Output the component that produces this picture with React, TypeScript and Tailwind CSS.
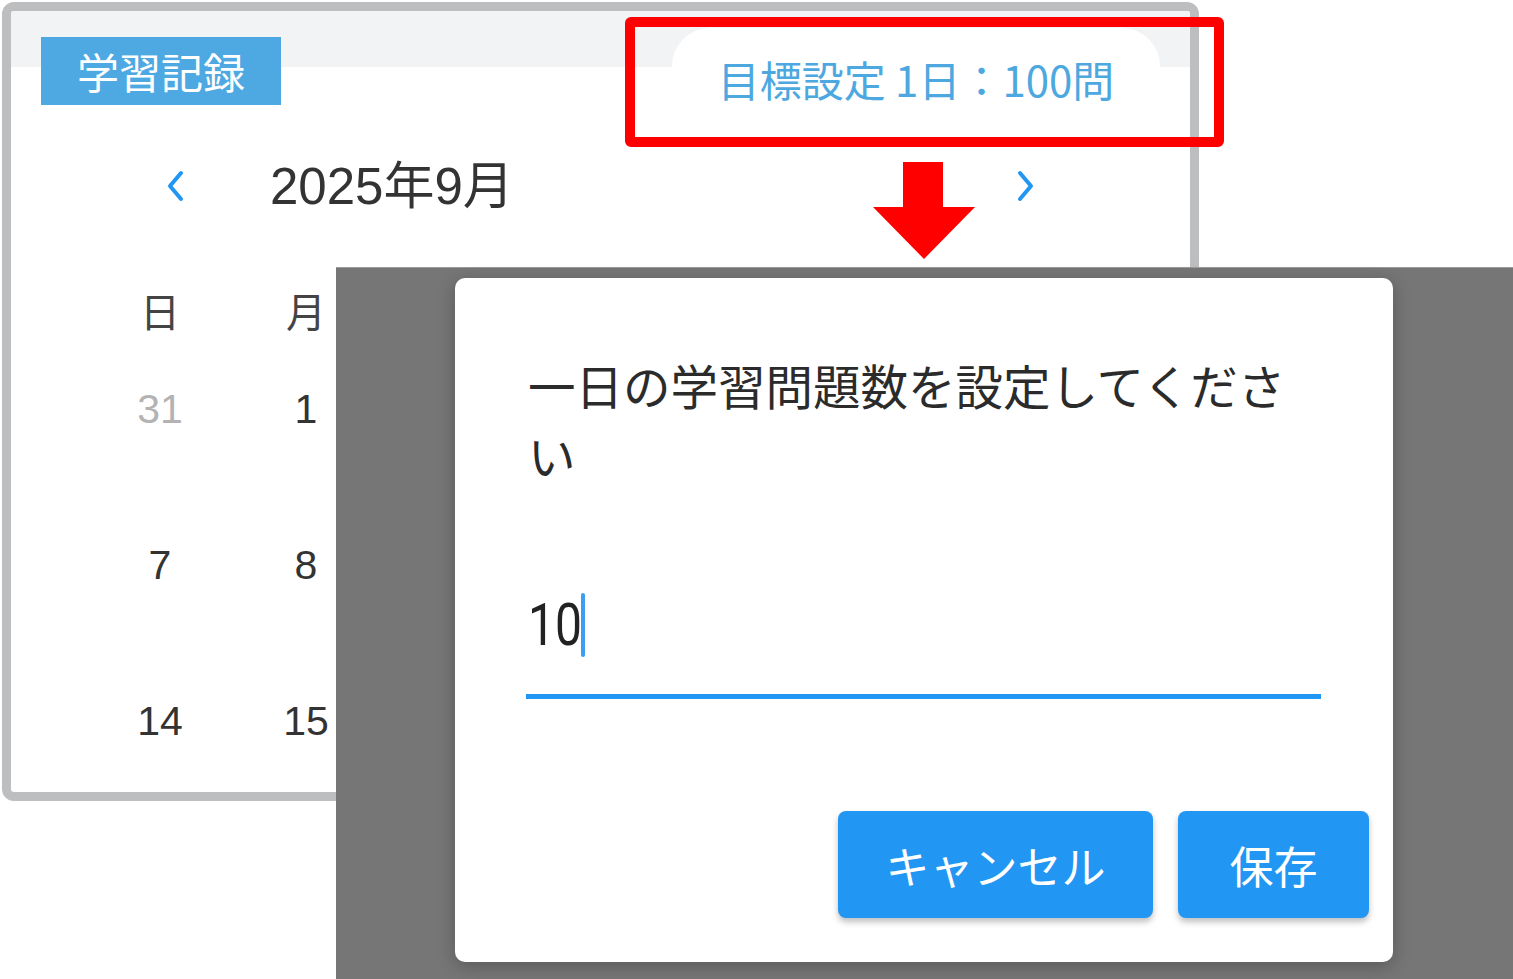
const jp = { fontFamily: '"Noto Sans CJK JP", "Noto Sans", sans-serif' }
const cal = { fontFamily: '"Liberation Sans", "Noto Sans CJK JP", sans-serif' }

const weekdays = ['日', '月', '火', '水', '木', '金', '土']
const rows = [
  [31, 1, 2, 3, 4, 5, 6],
  [7, 8, 9, 10, 11, 12, 13],
  [14, 15, 16, 17, 18, 19, 20],
]

function Chevron({ dir }: { dir: 'left' | 'right' }) {
  return (
    <svg width="20" height="32" viewBox="0 0 20 32" fill="none" stroke="#2196f3" strokeWidth="4" strokeLinecap="round" strokeLinejoin="round">
      {dir === 'left' ? <polyline points="15,3 4,16 15,29" /> : <polyline points="5,3 16,16 5,29" />}
    </svg>
  )
}

function Calendar() {
  return (
    <div className="ml-[2px] mt-[2px] w-[1197px] h-[799px] border-[9px] border-[#bdbec0] rounded-[12px] overflow-hidden bg-white">
      {/* tabs */}
      <div className="flex h-[94px] bg-[linear-gradient(to_bottom,#f2f3f5_56px,#ffffff_56px)]">
        <div style={jp} className="ml-[30px] mt-[26px] w-[240px] h-[68px] bg-[#4ea8e2] text-white text-[42px] leading-none flex items-center justify-center">
          学習記録
        </div>
        <div style={jp} className="ml-[391px] mt-[17px] w-[488px] h-[77px] bg-white rounded-t-[38px] text-[#4ea8e0] text-[42px] leading-none flex justify-center pt-[30px]">
          目標設定 1日：100問
        </div>
      </div>

      {/* month nav */}
      <div className="flex items-center h-[60px] mt-[51px] pl-[155px] pr-[155px]">
        <Chevron dir="left" />
        <div style={cal} className="ml-[84px] text-[51px] leading-none text-[#333333]">2025年9月</div>
        <div className="flex-1" />
        <Chevron dir="right" />
      </div>

      {/* grid */}
      <div style={cal} className="ml-[76px] mt-[64px]">
        <div className="grid grid-cols-[repeat(7,146px)] h-[60px] items-center">
          {weekdays.map(w => (
            <div key={w} style={jp} className="text-center text-[40px] leading-none text-[#444444]">{w}</div>
          ))}
        </div>
        {rows.map((r, i) => (
          <div key={i} className="grid grid-cols-[repeat(7,146px)] h-[156px]">
            {r.map((d, j) => (
              <div key={j} className={`text-center text-[41px] leading-none pt-[49px] ${i === 0 && j === 0 ? 'text-[#b3b3b3]' : 'text-[#333333]'}`}>{d}</div>
            ))}
          </div>
        ))}
      </div>
    </div>
  )
}

function Dialog() {
  return (
    <div className="absolute left-[336px] top-[267px] w-[1177px] h-[712px] bg-[#767676] border-t border-[#9a9a9a] pl-[119px] pt-[10px]">
      <div className="w-[938px] h-[684px] bg-white rounded-[10px] shadow-[0_4px_18px_rgba(0,0,0,0.25)]" style={jp}>
        <div className="pl-[73px] pr-[73px] pt-[72px] text-[47.5px] leading-[70px] text-[#2b2b2b]">
          一日の学習問題数を設定してください
        </div>
        <div className="pl-[73px] mt-[103px] flex items-center h-[64px]">
          <span className="w-[53px] text-[60px] leading-none text-[#222222]" style={{ fontFamily: 'Roboto, "Liberation Sans", sans-serif' }}>
            <span className="inline-block origin-left scale-x-[0.8]">10</span>
          </span>
          <span className="w-[4px] h-[64px] rounded-full bg-[#3d9df0]" />
        </div>
        <div className="ml-[71px] mt-[37px] w-[795px] h-[5px] bg-[#2196f3]" />
        <div className="flex justify-end gap-[25px] pr-[24px] mt-[112px]">
          <button className="w-[315px] h-[107px] rounded-[8px] bg-[#2196f3] text-white text-[44px] leading-none shadow-[0_4px_6px_rgba(0,0,0,0.25)]">キャンセル</button>
          <button className="w-[191px] h-[107px] rounded-[8px] bg-[#2196f3] text-white text-[44px] leading-none shadow-[0_4px_6px_rgba(0,0,0,0.25)]">保存</button>
        </div>
      </div>
    </div>
  )
}

export default function App() {
  return (
    <div className="relative w-[1513px] h-[979px] bg-white overflow-hidden">
      <Calendar />

      {/* highlight box */}
      <div className="absolute left-[625px] top-[17px] w-[599px] h-[130px] border-[10px] border-[#ff0000] rounded-[6px]" />

      {/* arrow */}
      <svg className="absolute left-[873px] top-[162px]" width="102" height="97" viewBox="0 0 102 97">
        <polygon points="30,0 70,0 70,45 102,45 51,97 0,45 30,45" fill="#ff0000" />
      </svg>

      <Dialog />
    </div>
  )
}
